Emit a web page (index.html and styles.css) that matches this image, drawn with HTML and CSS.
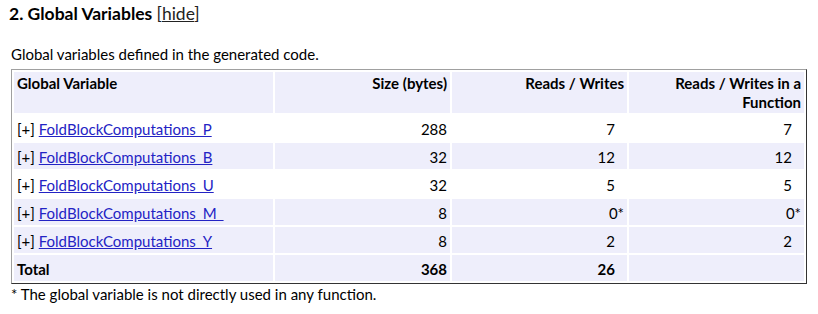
FILE: index.html
```html
<!DOCTYPE html>
<html>
<head>
<meta charset="utf-8">
<link rel="stylesheet" href="styles.css">
</head>
<body>
<h3 class="title">2. Global Variables <a class="toggle" href="#">[<span class="u">hide</span>]</a></h3>
<div class="section">
  <p class="caption">Global variables defined in the generated code.</p>
  <table class="vars">
    <colgroup>
      <col class="c-name">
      <col class="c-num">
      <col class="c-num">
      <col class="c-num">
    </colgroup>
    <thead>
      <tr>
        <th class="name">Global Variable</th>
        <th class="num">Size (bytes)</th>
        <th class="num">Reads / Writes</th>
        <th class="num">Reads / Writes in a Function</th>
      </tr>
    </thead>
    <tbody>
      <tr class="odd"><td class="name">[+] <a href="#">FoldBlockComputations_P</a></td><td class="num">288</td><td class="num pad">7</td><td class="num pad">7</td></tr>
      <tr class="even"><td class="name">[+] <a href="#">FoldBlockComputations_B</a></td><td class="num">32</td><td class="num pad">12</td><td class="num pad">12</td></tr>
      <tr class="odd"><td class="name">[+] <a href="#">FoldBlockComputations_U</a></td><td class="num">32</td><td class="num pad">5</td><td class="num pad">5</td></tr>
      <tr class="even"><td class="name">[+] <a href="#">FoldBlockComputations_M_</a></td><td class="num">8</td><td class="num">0*</td><td class="num">0*</td></tr>
      <tr class="even"><td class="name">[+] <a href="#">FoldBlockComputations_Y</a></td><td class="num">8</td><td class="num pad">2</td><td class="num pad">2</td></tr>
      <tr class="even total"><td class="name">Total</td><td class="num">368</td><td class="num pad">26</td><td class="num"></td></tr>
    </tbody>
  </table>
  <p class="note">* The global variable is not directly used in any function.</p>
</div>
</body>
</html>
```
FILE: styles.css
```css
html, body {
  margin: 0;
  padding: 0;
  background: #ffffff;
}
body {
  font-family: Lato, "Noto Sans", sans-serif;
  font-size: 15px;
  color: #000000;
}
.title {
  margin: 0;
  padding: 4px 0 0 9px;
  font-size: 17.5px;
  line-height: 20px;
  font-weight: bold;
}
.toggle {
  font-weight: normal;
  color: #222222;
  text-decoration: none;
}
.toggle .u {
  text-decoration: underline;
}
.section {
  padding: 0 0 0 11px;
}
.caption {
  margin: 21px 0 0 0;
  line-height: 19px;
}
.vars {
  width: 796px;
  table-layout: fixed;
  border-collapse: separate;
  border-spacing: 2px;
  border-style: solid;
  border-width: 1px;
  border-color: #a0a0a0 #333333 #333333 #a0a0a0;
  margin-top: 5px;
}
.c-name {
  width: 259px;
}
.c-num {
  width: 175px;
}
.vars th, .vars td {
  box-sizing: border-box;
  padding: 5px 3px 3px 3px;
  line-height: 18px;
}
.vars th {
  background: #eeeefb;
  font-weight: bold;
  vertical-align: top;
  line-height: 19px;
  padding: 2px 3px 1px 3px;
}
.vars .name {
  text-align: left;
}
.vars .num {
  text-align: right;
}
.vars td.pad {
  padding-right: 12px;
}
.vars tr.even td {
  background: #eeeefb;
}
.vars tr.total td {
  font-weight: bold;
}
.vars a {
  color: #2323c4;
  text-decoration: underline;
}
.note {
  margin: 1px 0 0 0;
  line-height: 19px;
}
```
